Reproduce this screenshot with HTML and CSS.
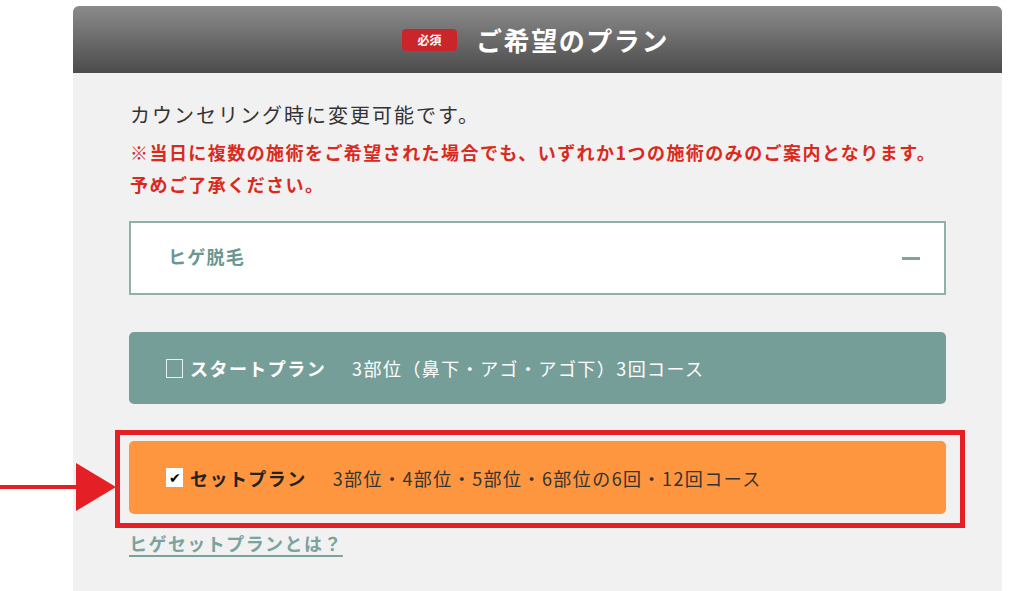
FILE: index.html
```html
<!DOCTYPE html>
<html lang="ja">
<head>
    <meta charset="UTF-8">
    <meta name="viewport" content="width=device-width, initial-scale=1.0">
    <title>ご希望のプラン</title>
    <link rel="stylesheet" href="styles.css">
</head>
<body>
    <div class="plan-panel">
        <h2 class="plan-head"><span class="plan-badge">必須</span>ご希望のプラン</h2>
        <div class="plan-body">
            <p class="plan-note">カウンセリング時に変更可能です。</p>
            <p class="plan-warn">※当日に複数の施術をご希望された場合でも、いずれか1つの施術のみのご案内となります。<br>予めご了承ください。</p>

            <div class="plan-select">
                <span>ヒゲ脱毛</span>
                <span class="plan-minus"></span>
            </div>

            <label class="plan-option plan-start">
                <span class="plan-check"></span>
                <strong>スタートプラン</strong>
                <span class="plan-detail">3部位（鼻下・アゴ・アゴ下）3回コース</span>
            </label>

            <div class="plan-mark">
                <svg class="plan-arrow" width="116" height="48" viewBox="0 0 116 48">
                    <rect x="0" y="22" width="80" height="4" fill="#e41f25"/>
                    <polygon points="76,0 116,24 76,48" fill="#e41f25"/>
                </svg>
                <label class="plan-option plan-set">
                    <span class="plan-check is-checked">✔</span>
                    <strong>セットプラン</strong>
                    <span class="plan-detail">3部位・4部位・5部位・6部位の6回・12回コース</span>
                </label>
            </div>

            <a class="plan-link" href="#">ヒゲセットプランとは？</a>
        </div>
    </div>
</body>
</html>
```

FILE: styles.css
```css
body {
    margin: 0;
    background-color: #ffffff;
    font-family: "Noto Sans CJK JP", "Noto Sans", sans-serif;
}
.plan-panel {
    width: 929px;
    height: 585px;
    margin: 6px 0 0 73px;
    background-color: #f1f1f1;
    border-radius: 6px 6px 0 0;
}
.plan-head {
    margin: 0;
    height: 67px;
    display: flex;
    align-items: center;
    justify-content: center;
    gap: 19px;
    padding-right: 4px;
    border-radius: 6px 6px 0 0;
    background: linear-gradient(#8b8b8b, #4b4b4b);
    color: #ffffff;
    font-size: 26px;
    font-weight: bold;
    letter-spacing: 0.06em;
}
.plan-badge {
    width: 55px;
    height: 22px;
    display: flex;
    align-items: center;
    justify-content: center;
    background-color: #c9252b;
    border-radius: 4px;
    font-size: 12px;
    letter-spacing: 0;
}
.plan-body {
    padding: 26px 56px 0 56px;
}
.plan-note {
    margin: 0 0 5px 1px;
    font-size: 20px;
    line-height: 32px;
    letter-spacing: 0.1em;
    color: #333333;
}
.plan-warn {
    margin: 0 0 21px 1px;
    font-size: 18px;
    line-height: 32px;
    letter-spacing: 0.08em;
    font-weight: bold;
    color: #d92a20;
}
.plan-select {
    height: 70px;
    display: flex;
    align-items: center;
    justify-content: space-between;
    padding: 0 24px 0 37px;
    border: 2px solid #8fb0ab;
    background-color: #ffffff;
    color: #6b9791;
    font-size: 18px;
    font-weight: bold;
    letter-spacing: 0.07em;
}
.plan-select span:first-child {
    margin-top: -4px;
}
.plan-minus {
    width: 18px;
    height: 3px;
    background-color: #7fa59f;
}
.plan-option {
    height: 72px;
    display: flex;
    align-items: center;
    padding-left: 37px;
    border-radius: 5px;
    font-size: 18px;
    letter-spacing: 0.08em;
}
.plan-option strong {
    margin: 0 26px 0 7px;
}
.plan-start {
    margin-top: 37px;
    background-color: #769e99;
    color: #ffffff;
}
.plan-set {
    height: 73px;
    background-color: #fd963e;
    color: #222222;
}
.plan-set .plan-detail {
    color: #333333;
}
.plan-check {
    width: 15px;
    height: 17px;
    border: 1px solid #e8efee;
    box-sizing: content-box;
}
.plan-check.is-checked {
    border-color: #ffffff;
    background-color: #ffffff;
    color: #000000;
    font-size: 14px;
    line-height: 17px;
    text-align: center;
    letter-spacing: 0;
}
.plan-mark {
    position: relative;
    margin-top: 37px;
}
.plan-mark::after {
    content: "";
    position: absolute;
    top: -11px;
    left: -14px;
    right: -19px;
    bottom: -14px;
    border: 5px solid #e41f25;
}
.plan-arrow {
    position: absolute;
    left: -129px;
    top: 22px;
}
.plan-link {
    display: inline-block;
    margin-top: 14px;
    font-size: 18px;
    line-height: 30px;
    font-weight: bold;
    letter-spacing: 0.08em;
    color: #7ca29d;
    text-decoration-thickness: 2px;
    text-underline-offset: 4px;
}
```
